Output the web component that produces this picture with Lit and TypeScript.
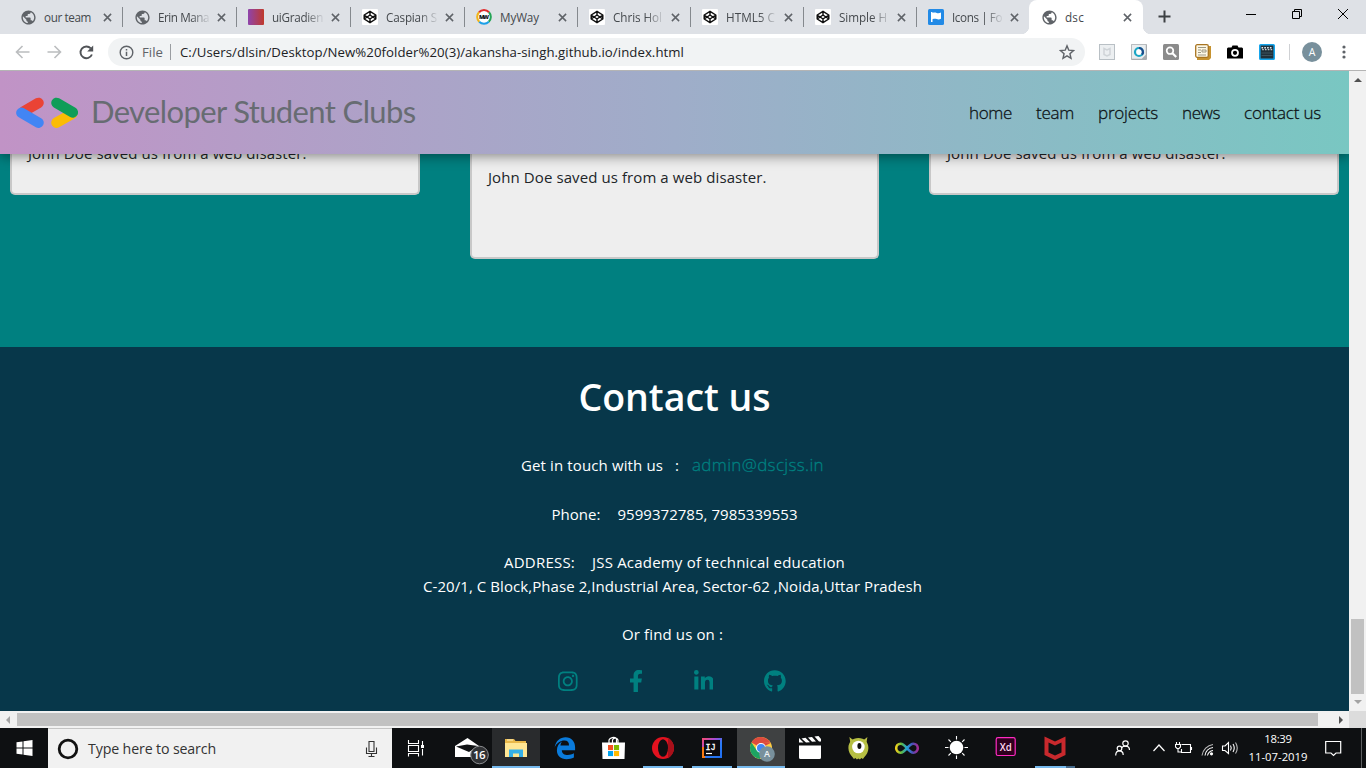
import { LitElement, html, css, svg } from "lit";
import { customElement, property } from "lit/decorators.js";

/** Inline text whose tracking is computed so that it spans a given width. */
@customElement("fit-text")
class FitText extends LitElement {
  @property({ type: Number }) span = 0;

  static styles = css`
    :host { display: inline-block; white-space: pre; }
  `;

  render() {
    return html`<span><slot></slot></span>`;
  }

  firstUpdated() {
    const count = (this.textContent ?? "").length;
    const inner = this.renderRoot.querySelector("span") as HTMLElement;
    const natural = inner.getBoundingClientRect().width;
    if (this.span && count) {
      this.style.letterSpacing = `${(this.span - natural) / count}px`;
      this.style.width = `${this.span}px`;
    }
  }
}

const globe = html`<svg class="fav" width="17" height="17" viewBox="0 0 24 24"><path fill="#5f6368" d="M12 2C6.48 2 2 6.48 2 12s4.480 10 10 10 10-4.480 10-10S17.520 2 12 2zm-1 17.930c-3.950-.49-7-3.850-7-7.930 0-.62.08-1.210.21-1.790L9 15v1c0 1.100.9 2 2 2v1.930zm6.900-2.540c-.26-.81-1-1.390-1.900-1.390h-1v-3c0-.55-.45-1-1-1H8v-2h2c.55 0 1-.45 1-1V7h2c1.100 0 2-.9 2-2v-.41c2.930 1.190 5 4.060 5 7.410 0 2.080-.8 3.970-2.100 5.390z"/></svg>`;

const gradientIcon = html`<svg class="fav" width="17" height="16" viewBox="0 0 17 16"><defs><linearGradient id="ug"><stop offset="0" stop-color="#8e44ad"/><stop offset="1" stop-color="#c0392b"/></linearGradient></defs><rect width="16" height="16" rx="1" fill="url(#ug)"/></svg>`;

const pen = html`<svg class="fav" width="17" height="16" viewBox="0 0 17 16"><rect width="16" height="16" rx="1" fill="#fff"/><path fill="none" stroke="#111" stroke-width="1.450" stroke-linejoin="round" d="M8 2.300 13.800 6V10L8 13.700 2.200 10V6ZM8 2.300V6M8 10V13.700M2.200 6 8 10 13.800 6M2.200 10 8 6 13.800 10"/></svg>`;

const myway = html`<svg class="fav" width="17" height="16" viewBox="0 0 17 16"><circle cx="8" cy="8" r="6" fill="#fff"/><g fill="none" stroke-width="2"><path stroke="#e02b2b" d="M3 3.300A6.800 6.800 0 0 1 13 3.300"/><path stroke="#23a455" d="M13 3.300A6.800 6.800 0 0 1 12.800 12.800"/><path stroke="#1ba0e8" d="M12.800 12.800A6.800 6.800 0 0 1 3.200 12.800"/><path stroke="#f2b418" d="M3.200 12.800A6.800 6.800 0 0 1 3 3.300"/></g><text x="8" y="10.100" text-anchor="middle" font-family="Open Sans, sans-serif" font-size="5.800" font-weight="800" fill="#111" textLength="10">MW</text></svg>`;

const flagIcon = html`<svg class="fav" width="17" height="16" viewBox="0 0 17 16"><rect width="16" height="16" rx="1.500" fill="#228ae6"/><path fill="#fff" d="M3 3h1.500v1c1.500-.6 3-.4 4.200 0 1.500.5 2.800.3 4.300-.4v6.200c-1.500.7-2.800.8-4.300.3-1.300-.4-2.700-.4-4.200.2V13H3z"/></svg>`;

const cross = html`<svg width="9" height="9" viewBox="0 0 9 9"><path d="M.9.9 8.100 8.100M8.100.9.9 8.100" stroke="#5f6368" stroke-width="1.500" fill="none"/></svg>`;

const tabs = [
  { title: "our team", icon: globe, span: 47, kind: "wide" },
  { title: "Erin Mana", icon: globe, span: 51, kind: "wide fading" },
  { title: "uiGradien", icon: gradientIcon, span: 51, kind: "wide fading" },
  { title: "Caspian S", icon: pen, span: 51, kind: "wide fading" },
  { title: "MyWay", icon: myway, span: 39, kind: "" },
  { title: "Chris Hol", icon: pen, span: 49, kind: "fading" },
  { title: "HTML5 C", icon: pen, span: 49, kind: "fading" },
  { title: "Simple H", icon: pen, span: 48, kind: "fading" },
  { title: "Icons | Fo", icon: flagIcon, span: 50, kind: "fading last" },
];

const extensions = [
  svg`<rect x=".5" y=".5" width="15" height="15" fill="#eceff1" stroke="#b9c0c5"/><path d="M5 4.500 8 6l3-1.500v6L8 12 5 10.500z" fill="none" stroke="#cfd4d8" stroke-width="1.500"/>`,
  svg`<rect width="16" height="16" rx="1" fill="#a9adb0"/><path d="M.8.8h14v10l-4 4h-10z" fill="#e9edef"/><circle cx="8" cy="8" r="4" fill="#fff" stroke="#1aa5c4" stroke-width="2.200"/><path d="M8 4a4 4 0 0 1 3 6.600" fill="none" stroke="#1d4b8a" stroke-width="2.200"/>`,
  svg`<rect width="16" height="16" rx="1.500" fill="#8b8b8b"/><circle cx="7" cy="6.700" r="3.300" fill="none" stroke="#fff" stroke-width="1.700"/><path d="m9.500 9.200 3.700 3.800" stroke="#fff" stroke-width="2.200"/>`,
  svg`<path d="M2 2h14v12l-2 2H2z" fill="#c6922f"/><rect x=".7" y=".7" width="12.600" height="12.600" rx="1.500" fill="#fdf8e6" stroke="#a87420" stroke-width="1.300"/><path d="M3 3.500h8M3 6h3M7 6h4v2H7zM3 8.500h3M3 11h8" stroke="#9d9884" fill="none"/>`,
  svg`<path d="M0 4.500 1 3.500h3.500L5.500 1.500h5l1 2H15l1 1V14.500H0z" fill="#000"/><circle cx="8" cy="8.800" r="3" fill="none" stroke="#fff" stroke-width="1.800"/>`,
  svg`<rect x=".8" y=".8" width="14.400" height="14.400" rx=".8" fill="#20303a" stroke="#16a5ec" stroke-width="1.600"/><path d="M2.500 3.800 13.500 3.800" stroke="#e4ecef" stroke-width="1.600" stroke-dasharray="1.600 1.200"/><path d="M3.200 5.600h10.500" stroke="#c4ccd0" stroke-width="1.400" stroke-dasharray="1.600 1.200"/><path d="M2.500 9h11M2.500 11.500h11" stroke="#3d535f"/>`,
];

const socials = [
  { w: 448, d: "M224.1 141c-63.6 0-114.9 51.3-114.9 114.9s51.3 114.9 114.9 114.9S339 319.5 339 255.9 287.7 141 224.1 141zm0 189.6c-41.1 0-74.7-33.5-74.7-74.7s33.5-74.7 74.7-74.7 74.7 33.5 74.7 74.7-33.6 74.7-74.7 74.7zm146.4-194.3c0 14.9-12 26.8-26.8 26.8-14.9 0-26.8-12-26.8-26.8s12-26.8 26.8-26.8 26.8 12 26.8 26.8zm76.1 27.2c-1.7-35.9-9.9-67.7-36.2-93.9-26.2-26.2-58-34.4-93.9-36.2-37-2.1-147.9-2.1-184.9 0-35.8 1.7-67.6 9.9-93.9 36.1s-34.4 58-36.2 93.9c-2.1 37-2.1 147.9 0 184.9 1.7 35.9 9.9 67.7 36.2 93.9s58 34.4 93.9 36.2c37 2.1 147.9 2.1 184.9 0 35.9-1.7 67.7-9.9 93.9-36.2 26.2-26.2 34.4-58 36.2-93.9 2.1-37 2.1-147.8 0-184.8zM398.8 388c-7.8 19.6-22.9 34.7-42.6 42.6-29.5 11.7-99.5 9-132.1 9s-102.7 2.6-132.1-9c-19.6-7.8-34.7-22.9-42.6-42.6-11.7-29.5-9-99.5-9-132.1s-2.6-102.7 9-132.1c7.8-19.6 22.9-34.7 42.6-42.6 29.5-11.7 99.5-9 132.1-9s102.7-2.6 132.1 9c19.6 7.8 34.7 22.9 42.6 42.6 11.7 29.5 9 99.5 9 132.1s2.7 102.7-9 132.1z" },
  { w: 320, d: "M279.14 288l14.22-92.66h-88.91v-60.13c0-25.35 12.42-50.06 52.24-50.06h40.42V6.26S260.43 0 225.36 0c-73.22 0-121.08 44.38-121.08 124.72v70.62H22.89V288h81.39v224h100.17V288z" },
  { w: 448, d: "M100.28 448H7.4V148.9h92.88zM53.79 108.1C24.09 108.1 0 83.5 0 53.8a53.79 53.79 0 0 1 107.58 0c0 29.7-24.1 54.3-53.79 54.3zM447.9 448h-92.68V302.4c0-34.7-.7-79.2-48.29-79.2-48.29 0-55.69 37.700-55.69 76.700V448h-92.780V148.900h89.080v40.800h1.300c12.400-23.500 42.690-48.300 87.880-48.300 94 0 111.280 61.900 111.280 142.300V448z" },
  { w: 496, d: "M165.900 397.400c0 2-2.300 3.600-5.200 3.600-3.300.3-5.600-1.300-5.600-3.600 0-2 2.300-3.600 5.200-3.600 3-.3 5.600 1.300 5.600 3.600zm-31.100-4.500c-.7 2 1.300 4.300 4.300 4.900 2.600 1 5.600 0 6.200-2s-1.300-4.300-4.300-5.200c-2.600-.7-5.500.3-6.200 2.300zm44.200-1.700c-2.900.7-4.900 2.600-4.600 4.900.3 2 2.900 3.300 5.900 2.600 2.900-.7 4.900-2.600 4.600-4.600-.3-1.900-3-3.200-5.900-2.900zM244.800 8C106.100 8 0 113.300 0 252c0 110.900 69.800 205.800 169.500 239.200 12.800 2.300 17.300-5.600 17.300-12.100 0-6.200-.3-40.400-.3-61.400 0 0-70 15-84.700-29.800 0 0-11.400-29.100-27.800-36.600 0 0-22.900-15.700 1.600-15.400 0 0 24.900 2 38.600 25.800 21.900 38.600 58.600 27.500 72.900 20.900 2.300-16 8.800-27.100 16-33.700-55.900-6.200-112.300-14.300-112.300-110.500 0-27.500 7.600-41.300 23.600-58.900-2.600-6.500-11.100-33.300 2.600-67.900 20.900-6.500 69 27 69 27 20-5.600 41.500-8.500 62.800-8.500s42.800 2.900 62.800 8.500c0 0 48.100-33.600 69-27 13.700 34.700 5.200 61.400 2.600 67.900 16 17.700 25.800 31.500 25.800 58.900 0 96.500-58.900 104.200-114.800 110.500 9.200 7.900 17 22.900 17 46.400 0 33.700-.3 75.400-.3 83.600 0 6.500 4.600 14.400 17.300 12.100C428.200 457.800 496 362.900 496 252 496 113.300 383.500 8 244.800 8z" },
];

// Each taskbar icon is drawn in a 48x40 cell.
const apps = [
  { cls: "", art: svg`<path d="M12 18 24.500 10 36 18 36 29H12z" fill="#fff"/><path d="M13 18.500 24 16.500 35 18 26 24z" fill="#101214"/><circle cx="36.500" cy="27" r="8.800" fill="#303235" stroke="#8b8d90" stroke-width="1"/><text x="36.300" y="31.200" text-anchor="middle" font-size="11.500" font-weight="600" fill="#fff" textLength="12.500">16</text>` },
  { cls: "open full", art: svg`<path d="M13 11h9l1.500 2H34v16H13z" fill="#e9b84a"/><path d="M13 15h22v14H13z" fill="#ffe694"/><path d="M15 12h6" stroke="#fff3c4"/><path d="M17 29v-7.500h14V29h-4v-3.500h-6V29z" fill="#35b0e8"/>` },
  { cls: "", art: svg`<path d="M14 19.500C15 12.500 19.500 9 25 9c6 0 9.500 4.500 9.500 10v3H21.200c.2 3.300 2.700 4.800 6 4.800 2.200 0 4.300-.6 6.100-1.700v4.200c-2.200 1.200-4.700 1.700-7.300 1.700-6 0-9.700-3.500-9.700-9 0-4 2-7 5.200-8.700-1 1.200-1.500 2.500-1.700 3.900h8.600c.1-3.200-1.500-4.900-4.600-4.900-4 0-7.500 2.400-9.800 6.700z" fill="#0a7bdb" transform="translate(-.4 .2)"/>` },
  { cls: "", art: svg`<g transform="translate(-1)"><path d="M20 15v-3a4.500 3.500 0 0 1 7.500-1.500V15M23.500 15v-3a3 3 0 0 1 5.500 0v3" fill="none" stroke="#fff" stroke-width="1.200"/><path d="M13 14.500h23l-.5 16.500h-22z" fill="#fff"/><path d="M19 17h5.100v5.100H19z" fill="#f25022"/><path d="M25 17h5.100v5.100H25z" fill="#7fba00"/><path d="M19 23h5.100v5.100H19z" fill="#00a4ef"/><path d="M25 23h5.100v5.100H25z" fill="#ffb900"/></g>` },
  { cls: "open", art: svg`<ellipse cx="24" cy="20" rx="11" ry="11" fill="#e3121f"/><path d="M29 9.500c8 5 8 16 0 21z" fill="#a8101a"/><ellipse cx="24" cy="20" rx="5" ry="8.700" fill="#0e1012"/>` },
  { cls: "open", art: svg`<defs><linearGradient id="ij" x2="1" y2="1"><stop offset="0" stop-color="#fc4c6a"/><stop offset=".35" stop-color="#a54bd6"/><stop offset=".6" stop-color="#2b7cf6"/><stop offset="1" stop-color="#1f6df0"/></linearGradient></defs><rect x="14" y="10" width="20" height="20" fill="url(#ij)"/><path d="M14 19h3v11h-3z" fill="#f97a12"/><rect x="16" y="12" width="16" height="16" fill="#0b0b10"/><text x="17.500" y="21.500" font-family="Liberation Mono, monospace" font-size="8.500" fill="#fff" stroke="#fff" stroke-width=".3">IJ</text><path d="M18 25.500h6" stroke="#fff" stroke-width="1.200"/>` },
  { cls: "open full active", art: svg`<circle cx="24" cy="20" r="11" fill="#ffcd41"/><path d="M24 20 14.500 14.500A11 11 0 0 1 33.600 14.800L24 15z" fill="#dd4b3e"/><path d="M24 20 33.600 15H24z" fill="#dd4b3e"/><path d="M14.500 14.500A11 11 0 0 0 22.800 31L28 22.500 19.500 22z" fill="#1da462"/><circle cx="24" cy="20" r="5" fill="#fff"/><circle cx="24" cy="20" r="4" fill="#4287f5"/><circle cx="30" cy="26" r="7.800" fill="#78909c"/><text x="30" y="29.300" text-anchor="middle" font-size="9" font-weight="600" fill="#eef2f4">A</text>` },
  { cls: "", art: svg`<path d="M13 17.500h22V29.500a1.500 1.500 0 0 1-1.500 1.500h-19A1.500 1.500 0 0 1 13 29.500z" fill="#fff"/><path d="m13 10 4.500 4.500H13zM15.500 10.500l4-.8 4.500 4.500-4 .2zM22 9.500l4-.5 4 4.500-4 .3zM28.500 8.500l4-.5 2.500 3v2.500h-2z" fill="#fff"/>` },
  { cls: "", art: svg`<g transform="translate(-.6)"><path d="m15 9 1 6 4-2zM33 9l-1 6-4-2z" fill="#b9bd45"/><path d="M24 10c6 0 10 4 10 10 0 4-2 7-4 9l-1.500 2-1.500-1-1.500 1.500L24 30.500l-1.500 1L21 30l-1.500 1-1.500-2c-2-2-4-5-4-9 0-6 4-10 10-10z" fill="#b6bf43"/><circle cx="24" cy="19" r="6.300" fill="#fff"/><ellipse cx="25" cy="18" rx="2" ry="3" fill="#111"/></g>` },
  { cls: "", art: svg`<defs><linearGradient id="inf"><stop offset="0" stop-color="#f0d21c"/><stop offset=".25" stop-color="#5cb947"/><stop offset=".5" stop-color="#1fa2dd"/><stop offset=".75" stop-color="#4a4fb5"/><stop offset="1" stop-color="#a02b93"/></linearGradient></defs><path d="M24 20.500c-3-3.500-4.500-4.500-6.300-4.500a4.500 4.500 0 0 0 0 9c1.800 0 3.300-1 6.300-4.500s4.500-4.500 6.300-4.500a4.500 4.500 0 0 1 0 9c-1.800 0-3.300-1-6.300-4.500z" fill="none" stroke="url(#inf)" stroke-width="2.600" transform="translate(-1 -.3)"/>` },
  { cls: "", art: svg`<g transform="translate(-1)"><circle cx="24.500" cy="19.500" r="6.800" fill="#fff"/><path d="M24.500 8v3.500M24.500 27.500V31M13 19.500h3.500M32.500 19.500H36M16.500 11.500l2.300 2.300M30.200 25.200l2.300 2.300M32.500 11.500l-2.300 2.300M18.800 25.200l-2.300 2.300" stroke="#fff" stroke-width="1.100"/></g>` },
  { cls: "", art: svg`<rect x="14.200" y="9.700" width="19" height="17.800" rx="1.800" fill="#2e001e" stroke="#ff2bc2" stroke-width="1.200"/><text x="23.700" y="23" text-anchor="middle" font-size="11.500" font-weight="600" fill="#ffd9f2" textLength="12" lengthAdjust="spacingAndGlyphs">Xd</text>` },
  { cls: "open split", art: svg`<path d="m13.500 8.500 10.500 5 10.500-5V27L24 32 13.500 27zM17.500 14.500v10L24 27.500l6.500-3v-10L24 17.500z" fill="#c8292d" fill-rule="evenodd"/>` },
];

@customElement("app-root")
class AppRoot extends LitElement {
  static styles = css`
    :host {
      display: grid; grid-template-rows: 34px 36px 1px 640px 17px 40px;
      width: 1366px; height: 768px; overflow: hidden;
      font-family: "Open Sans", "Noto Sans", sans-serif;
    }
    svg { display: block; flex: none; }

    .tabstrip { display: flex; background: #dee1e6; padding-left: 9px; font-size: 11.700px; color: #45494d; }
    .tab { box-sizing: border-box; width: 113px; height: 34px; display: flex; align-items: center; padding-left: 11px; position: relative; }
    .tab::after { content: ""; width: 1px; height: 20px; background: #85898e; margin-left: 10px; flex: none; }
    .label { width: 50px; white-space: nowrap; margin: 0 8px 0 7px; line-height: 16px; flex: none; }
    .wide { width: 114px; }
    .wide .label { width: 51px; }
    .fading .label { -webkit-mask-image: linear-gradient(to right, #000 65%, transparent 104%); mask-image: linear-gradient(to right, #000 65%, transparent 104%); }
    .last::after { visibility: hidden; }
    .current { width: 114px; background: #fff; border-radius: 8px 8px 0 0; margin-left: -1px; padding-left: 12px; }
    .current::after { visibility: hidden; }
    .current::before { content: ""; position: absolute; left: -8px; right: -8px; bottom: 0; height: 8px;
      background: radial-gradient(circle at 0 0, transparent 8px, #fff 8.500px) left / 8px 8px no-repeat,
        radial-gradient(circle at 100% 0, transparent 8px, #fff 8.500px) right / 8px 8px no-repeat; }
    .plus { margin: 10px 0 0 15px; }
    .window-buttons { display: flex; gap: 34px; margin: 8px 17px 0 auto; align-items: flex-start; }

    .toolbar { display: flex; align-items: center; background: #fff; }
    .history { display: flex; gap: 17px; padding-left: 15px; width: 93px; box-sizing: content-box; }
    .omnibox { box-sizing: border-box; width: 977px; height: 28px; border-radius: 14px; background: #f1f3f4; display: flex; align-items: center; padding: 0 10px 0 11px; font-size: 13.200px; color: #202124; }
    .scheme { color: #5f6368; margin-left: 8px; }
    .bar { width: 1px; height: 16px; background: #9a9da1; margin: 0 9px 0 7px; }
    .star { margin-left: auto; }
    .extensions { display: flex; gap: 16px; margin-left: 14px; }
    .tool-line { width: 1px; height: 16px; background: #cfd1d4; margin: 0 12px 0 14px; }
    .avatar { width: 20px; height: 20px; border-radius: 50%; background: #78909c; color: #fff; font-size: 10.500px; line-height: 20px; text-align: center; }
    .menu { margin-left: 20px; }
    .rule { background: #b4b4b4; }

    .viewport { display: grid; grid-template-columns: 1349px 17px; overflow: hidden; }
    .page { position: relative; height: 640px; overflow: hidden; background: #008080; font-size: 15px; line-height: 24px; }
    .site-header { position: absolute; top: 0; left: 0; width: 1349px; height: 83px; box-sizing: border-box; padding: 0 28px 0 16px; display: flex; align-items: center; background: linear-gradient(to right, #c193c6, #9fadc9 50%, #79c7c2); box-shadow: 0 2px 12px rgba(0, 0, 0, 0.45); }
    .brand { font-family: Lato, "Open Sans", sans-serif; font-size: 31px; line-height: 40px; color: #676c72; margin: 0 0 3px 13px; }
    .links { display: flex; gap: 24px; margin-left: auto; font-size: 17px; color: #0d1316; font-weight: 300; -webkit-text-stroke: 0.300px #0d1316; }
    .cards { display: grid; grid-template-columns: 410px 409px 410px; gap: 50px; padding: 0 10px; height: 276px; align-items: start; box-sizing: border-box; }
    .card { box-sizing: border-box; height: 124px; border: 2px solid #c8c8c8; border-top: 0; border-radius: 0 0 5px 5px; background: #eee; padding: 70px 16px 0; color: #212529; }
    .featured { height: 188px; padding-top: 94px; }

    .contact { background: #07374a; height: 364px; color: #fff; display: flex; flex-direction: column; align-items: center; box-sizing: border-box; padding-top: 26px; }
    .title { font-size: 37.500px; font-weight: 600; line-height: 48px; margin: 0 0 32px; }
    .row { display: flex; height: 24px; align-items: center; margin-bottom: 24px; }
    .touch { margin-bottom: 25px; }
    .nudge { margin-right: 4px; }
    .tight { margin-bottom: 0; }
    .colon { margin: 0 12px; width: 5px; }
    .mail { font-size: 17px; font-weight: 300; color: #008080; -webkit-text-stroke: 0.300px #008080; }
    .value { margin-left: 17px; }
    .socials { display: flex; gap: 51px; margin: 0 5px 0 0; fill: #008080; }

    .vscroll { background: #f1f1f1; display: flex; flex-direction: column; align-items: center; justify-content: space-between; padding: 7px 0 7px; box-sizing: border-box; }
    .vthumb { width: 13px; height: 75px; background: #c1c1c1; margin: auto 0 6px; }
    .hscroll { display: flex; align-items: center; background: #f1f1f1; }
    .hthumb { width: 1301px; height: 13px; background: #c1c1c1; margin: 0 21px 0 6px; }
    .corner { width: 17px; height: 17px; background: #dcdcdc; margin-left: auto; }

    .taskbar { display: flex; background: #0e1012; color: #fff; }
    .start { width: 48px; display: grid; place-items: center; }
    .search { box-sizing: border-box; width: 344px; background: #f1f1f1; border-top: 1px solid #c4c4c4; display: flex; align-items: center; padding: 0 14px 0 9px; font-size: 14.200px; color: #333; }
    .query { margin-left: 9px; }
    .mic { margin-left: auto; }
    .taskview { width: 51px; box-sizing: border-box; padding: 12px 0 0 15px; }
    .apps { display: flex; gap: 1px; }
    .app { width: 48px; height: 40px; position: relative; }
    .full { background: #292b2d; }
    .active { background: #3f4142; }
    .open::after { content: ""; position: absolute; left: 4px; right: 4px; bottom: 0; height: 2px; background: #76b9ed; }
    .full::after { left: 0; right: 0; }
    .split::after { background: linear-gradient(to right, #76b9ed 78%, #44698a 78%); }
    .tray { display: flex; flex: 1; align-items: center; padding-left: 36px; }
    .clock { width: 60px; text-align: center; font-size: 11.300px; line-height: 18px; margin-left: 7px; }
    .notify { margin-left: 17px; }
    .peek { width: 1px; height: 40px; background: #5d5f61; margin: 0 4px 0 auto; }
  `;

  private renderTabs() {
    return html`<div class="tabstrip">
      ${tabs.map((t) => html`<div class="tab ${t.kind}">${t.icon}
        <div class="label"><fit-text .span=${t.span}>${t.title}</fit-text></div>${cross}</div>`)}
      <div class="tab current">${globe}<div class="label"><fit-text .span=${19}>dsc</fit-text></div>${cross}</div>
      <svg class="plus" width="13" height="13" viewBox="0 0 13 13"><path d="M6.500.5v12M.5 6.500h12" stroke="#3c4043" stroke-width="2"/></svg>
      <div class="window-buttons">
        <svg width="12" height="12" viewBox="0 0 12 12"><path d="M1 6.500h10" stroke="#000"/></svg>
        <svg width="12" height="12" viewBox="0 0 12 12"><path d="M1.500 3.500h7v7h-7zM3.500 3.500v-2h7v7h-2" fill="none" stroke="#000"/></svg>
        <svg width="12" height="12" viewBox="0 0 12 12"><path d="m1 1 10 10M11 1 1 11" stroke="#000"/></svg>
      </div>
    </div>`;
  }

  private renderToolbar() {
    return html`<div class="toolbar">
      <div class="history">
        <svg width="15" height="14" viewBox="0 0 15 14"><path d="M14.500 7H1.500M7.500 1 1.500 7l6 6" fill="none" stroke="#bbbdbf" stroke-width="1.600"/></svg>
        <svg width="15" height="14" viewBox="0 0 15 14"><path d="M.5 7h13M7.500 1l6 6-6 6" fill="none" stroke="#bbbdbf" stroke-width="1.600"/></svg>
        <svg width="15" height="15" viewBox="0 0 15 15"><path d="M12.900 9.500A5.900 5.900 0 1 1 11.800 3.400" fill="none" stroke="#505357" stroke-width="1.900"/><path d="M14.200.6V6.600H8.200z" fill="#505357"/></svg>
      </div>
      <div class="omnibox">
        <svg width="15" height="15" viewBox="0 0 15 15"><circle cx="7.500" cy="7.500" r="6.300" fill="none" stroke="#5f6368" stroke-width="1.400"/><path d="M7.500 6.700v4.300M7.500 4v1.500" stroke="#5f6368" stroke-width="1.500"/></svg>
        <fit-text class="scheme" .span=${21}>File</fit-text>
        <div class="bar"></div>
        <fit-text .span=${504}>C:/Users/dlsin/Desktop/New%20folder%20(3)/akansha-singh.github.io/index.html</fit-text>
        <svg class="star" width="16" height="16" viewBox="0 0 24 24"><path fill="none" stroke="#5f6368" stroke-width="2.100" d="m12 2.800 2.700 6.500 7 .6-5.300 4.600 1.600 6.900-6-3.700-6 3.700 1.600-6.900L2.300 9.900l7-.6z"/></svg>
      </div>
      <div class="extensions">${extensions.map((e) => html`<svg width="16" height="16" viewBox="0 0 16 16">${e}</svg>`)}</div>
      <div class="tool-line"></div>
      <div class="avatar">A</div>
      <svg class="menu" width="4" height="14" viewBox="0 0 4 14" fill="#5f6368"><circle cx="2" cy="2" r="1.600"/><circle cx="2" cy="7" r="1.600"/><circle cx="2" cy="12" r="1.600"/></svg>
    </div>`;
  }

  private renderPage() {
    const links: [string, number][] = [["home", 43], ["team", 38], ["projects", 60], ["news", 38], ["contact us", 77]];
    return html`<div class="page">
      <div class="cards">
        ${["", "featured", ""].map((c) => html`<div class="card ${c}"><fit-text .span=${278.5}>John Doe saved us from a web disaster.</fit-text></div>`)}
      </div>
      <div class="contact">
        <h1 class="title"><fit-text .span=${192}>Contact us</fit-text></h1>
        <div class="row nudge touch"><fit-text .span=${142}>Get in touch with us</fit-text><span class="colon">:</span><fit-text class="mail" .span=${132}>admin@dscjss.in</fit-text></div>
        <div class="row"><fit-text .span=${49}>Phone:</fit-text><fit-text class="value" .span=${180}>9599372785, 7985339553</fit-text></div>
        <div class="row tight"><fit-text .span=${71}>ADDRESS:</fit-text><fit-text class="value" .span=${253}>JSS Academy of technical education</fit-text></div>
        <div class="row nudge"><fit-text .span=${499}>C-20/1, C Block,Phase 2,Industrial Area, Sector-62 ,Noida,Uttar Pradesh</fit-text></div>
        <div class="row nudge"><fit-text .span=${101}>Or find us on :</fit-text></div>
        <div class="socials">${socials.map((s) => html`<svg width=${(s.w / 512) * 22.4} height="22.4" viewBox="0 0 ${s.w} 512"><path d=${s.d}/></svg>`)}</div>
      </div>
      <header class="site-header">
        <svg width="62" height="32" viewBox="0 0 62 32" fill="none" stroke-width="10.500" stroke-linecap="round">
          <path d="M22.500 5.900 8 14.300" stroke="#ea4335"/><path d="M5.400 15.800 22.500 25.700" stroke="#4285f4"/>
          <path d="M56 17 40.500 25.700" stroke="#fbbc04"/><path d="M40.500 5.900 56.800 15.400" stroke="#0f9d58"/>
        </svg>
        <fit-text class="brand" .span=${324.5}>Developer Student Clubs</fit-text>
        <nav class="links">${links.map(([t, w]) => html`<fit-text .span=${w}>${t}</fit-text>`)}</nav>
      </header>
    </div>`;
  }

  private renderTaskbar() {
    return html`<div class="taskbar">
      <div class="start"><svg width="17" height="16" viewBox="0 0 17 16"><path fill="#fff" d="M.5 2.300 6.500 1.400V7.500H.5zM7.500 1.200 16.500 0V7.500h-9zM.5 8.500h6v6.100l-6-.9zM7.500 8.500h9V16l-9-1.200z"/></svg></div>
      <div class="search">
        <svg width="22" height="22" viewBox="0 0 22 22"><circle cx="11" cy="11" r="8.800" fill="none" stroke="#111" stroke-width="2.800"/></svg>
        <fit-text class="query" .span=${128}>Type here to search</fit-text>
        <svg class="mic" width="13" height="18" viewBox="0 0 13 18"><path d="M4 1.500h5v10H4zM1.500 7.500v6h10v-6M6.500 13.500V16.500M3.500 16.500h6" fill="none" stroke="#333" stroke-width="1.100"/></svg>
      </div>
      <div class="taskview"><svg width="17" height="17" viewBox="0 0 17 17"><path d="M1.500 0v3.500h10V0M1.500 5.500h10v6h-10zM1.500 16.500v-3h10v3M15.500 1v4M15.500 9v6.500" fill="none" stroke="#fff" stroke-width="1.100"/><path d="M14 5h3v3h-3z" fill="#fff"/></svg></div>
      <div class="apps">${apps.map((a) => html`<div class="app ${a.cls}"><svg width="48" height="40" viewBox="0 0 48 40">${a.art}</svg></div>`)}</div>
      <div class="tray">
        <svg width="16" height="16" viewBox="0 0 16 16" fill="none" stroke="#fff" stroke-width="1.200"><circle cx="4.500" cy="8.500" r="2.300"/><circle cx="10.500" cy="3.500" r="2.700"/><path d="M.7 15.500c0-3 1.600-4.600 3.800-4.600s3.700 1.700 3.700 4M6.500 7.800c.8-1 2.200-1.700 4-1.700 2.500 0 4 1.800 4 4"/></svg>
        <svg width="44" height="16" viewBox="0 0 44 16" fill="none" stroke="#fff" stroke-width="1.200"><path d="m22.500 11 5.500-6 5.500 6"/></svg>
        <svg width="18" height="16" viewBox="0 0 18 16" fill="none" stroke="#fff" stroke-width="1.100"><path d="M6.500 4.500h9v8h-9V9M16.500 7v3M.5 4.500h5v2.500l-1.500 1.500h-2L.5 7zM1.500 4.500V2M4.500 4.500V2M3 8.500v3.500h3"/></svg>
        <svg width="26" height="16" viewBox="0 0 26 16" fill="none" stroke="#fff" stroke-width="1.100"><path d="M9 15.500A13 13 0 0 1 20 4.500" stroke="#b8b8b8"/><path d="M12 15.500A9.500 9.500 0 0 1 20 7.500M14.500 15.500A6.500 6.500 0 0 1 20 10.500"/><circle cx="18.500" cy="13.800" r="1.600" fill="#fff" stroke="none"/></svg>
        <svg width="22" height="16" viewBox="0 0 22 16" fill="none" stroke="#fff" stroke-width="1.100"><path d="M3.500 6h2.500L9.500 2.500v11L6 10.500H3.500zM11.500 5.500q1.500 2.500 0 5M14 4q2.500 4 0 8"/><path d="M16.500 2.500q3.500 5.500 0 11" stroke="#bbb"/></svg>
        <div class="clock"><fit-text .span=${27.500}>18:39</fit-text><br /><fit-text .span=${59}>11-07-2019</fit-text></div>
        <svg class="notify" width="17" height="17" viewBox="0 0 17 17"><path d="M.7 1.500h15v11.500H11L8.500 15.500 6 13H.7z" fill="none" stroke="#fff" stroke-width="1.200"/></svg>
        <div class="peek"></div>
      </div>
    </div>`;
  }

  render() {
    return html`
      ${this.renderTabs()} ${this.renderToolbar()}
      <div class="rule"></div>
      <div class="viewport">
        ${this.renderPage()}
        <div class="vscroll">
          <svg width="8" height="4" viewBox="0 0 8 4"><path d="M4 0 8 4H0z" fill="#505050"/></svg>
          <div class="vthumb"></div>
          <svg width="8" height="4" viewBox="0 0 8 4"><path d="M0 0h8L4 4z" fill="#a3a3a3"/></svg>
        </div>
      </div>
      <div class="hscroll">
        <svg width="11" height="8" viewBox="0 0 11 8"><path d="M10 0v8L6 4z" fill="#a3a3a3"/></svg>
        <div class="hthumb"></div>
        <svg width="5" height="8" viewBox="0 0 5 8"><path d="M0 0v8l4-4z" fill="#505050"/></svg>
        <div class="corner"></div>
      </div>
      ${this.renderTaskbar()}
    `;
  }
}
